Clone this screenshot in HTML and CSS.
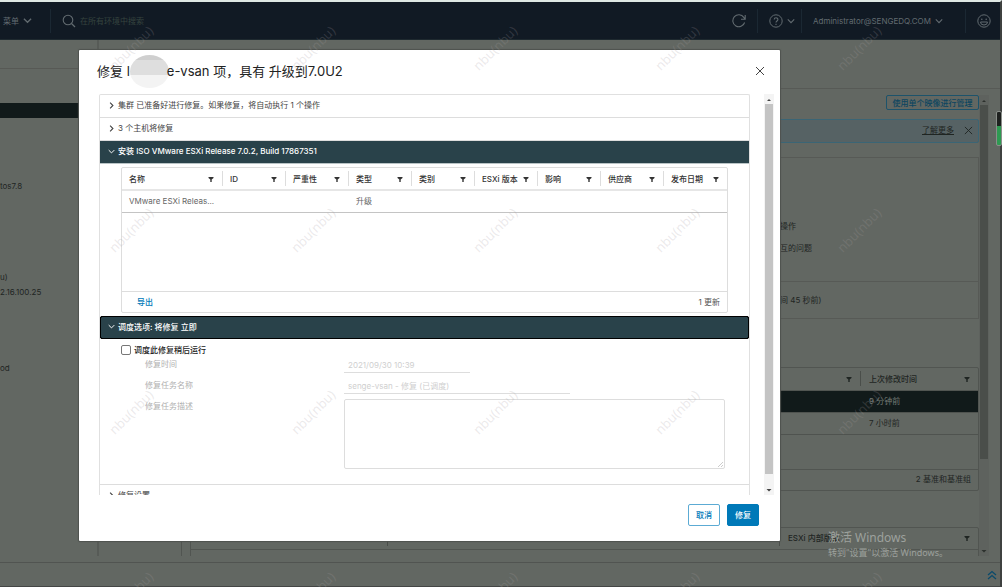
FILE: index.html
```html
<!DOCTYPE html>
<html lang="zh-CN">
<head>
<meta charset="utf-8">
<title>vSphere Client</title>
<link rel="stylesheet" href="styles.css">
</head>
<body>
<svg class="defs" aria-hidden="true">
  <symbol id="down" viewBox="0 0 10 10"><path d="M1 3l4 4 4-4" fill="none" stroke="currentColor" stroke-width="1.4"/></symbol>
  <symbol id="right" viewBox="0 0 10 10"><path d="M3 1l4 4-4 4" fill="none" stroke="currentColor" stroke-width="1.6"/></symbol>
  <symbol id="filter" viewBox="0 0 6 6"><path d="M.5 1h5v1L3.700 3.500V6H2.300V3.500L.5 2z" fill="currentColor"/></symbol>
  <symbol id="close" viewBox="0 0 10 10"><path d="M1 1l8 8M9 1l-8 8" fill="none" stroke="currentColor" stroke-width="1"/></symbol>
  <symbol id="tri-up" viewBox="0 0 6 4"><path d="M1 3l2-2 2 2z" fill="currentColor"/></symbol>
  <symbol id="tri-down" viewBox="0 0 6 4"><path d="M.5 1L3 3.500 5.500 1z" fill="currentColor"/></symbol>
</svg>
<div class="app">
  <header class="topbar">
    <button class="menu">菜单 <svg class="i9"><use href="#down"/></svg></button>
    <label class="search">
      <svg class="i14" viewBox="0 0 14 14"><circle cx="6" cy="6" r="4.8" fill="none" stroke="currentColor" stroke-width="1.1"/><path d="M9.5 9.5L13 13" stroke="currentColor" stroke-width="1.3"/></svg>
      <input type="text" placeholder="在所有环境中搜索" aria-label="在所有环境中搜索">
    </label>
    <button class="refresh" aria-label="刷新"><svg class="i14" viewBox="0 0 14 14"><path d="M12.6 8.5A6 6 0 1 1 11.8 3.4L13 5M13.2 1v4.2H9" fill="none" stroke="currentColor" stroke-width="1.1"/></svg></button>
    <button class="help" aria-label="帮助"><svg class="i14" viewBox="0 0 14 14"><circle cx="7" cy="7" r="6.2" fill="none" stroke="currentColor"/><path d="M5.2 5.6c0-2.4 3.7-2.4 3.7-.1C8.900 7 7 7 7 8.600M7 9.700v1.200" fill="none" stroke="currentColor" stroke-width="1.1"/></svg><svg class="i8"><use href="#down"/></svg></button>
    <button class="user">Administrator@SENGEDQ.COM <svg class="i8"><use href="#down"/></svg></button>
    <button class="smile" aria-label="反馈"><svg class="i14" viewBox="0 0 14 14"><circle cx="7" cy="7" r="6.200" fill="none" stroke="currentColor"/><circle cx="4.800" cy="5.200" r=".8" fill="currentColor"/><circle cx="9.200" cy="5.200" r=".8" fill="currentColor"/><path d="M3.500 8h7a3.500 3 0 0 1-7 0z" fill="none" stroke="currentColor"/></svg></button>
  </header>
  <div class="workspace">
    <nav class="side">
      <div class="side-head"></div>
      <div class="side-sel"></div>
      <ul>
        <li class="n1">tos7.8</li>
        <li class="n2">u)</li>
        <li class="n3">2.16.100.25</li>
        <li class="n4">od</li>
      </ul>
    </nav>
    <main class="main">
      <div class="main-head"></div>
      <div class="pane">
        <div class="rail"></div>
        <div class="pane-body">
          <div class="actions"><button class="btn-dim">使用单个映像进行管理</button></div>
          <div class="alert"><a href="#more">了解更多</a><button aria-label="关闭"><svg class="i9"><use href="#close"/></svg></button></div>
          <section class="card">
            <div class="card-main"><p>操作</p><p>互的问题</p></div>
            <div class="card-foot">间 45 秒前)</div>
          </section>
          <div class="grid-dim">
            <table>
              <thead><tr><th><div class="sep"><svg class="i6"><use href="#filter"/></svg></div></th><th class="c-time"><div>上次修改时间<svg class="i6"><use href="#filter"/></svg></div></th></tr></thead>
              <tbody><tr class="sel"><td></td><td>9 分钟前</td></tr><tr><td></td><td>7 小时前</td></tr></tbody>
            </table>
            <div class="grid-dim-foot">2 基准和基准组</div>
          </div>
          <div class="grid-dim second">
            <table>
              <thead><tr><th class="c-host"><div class="sep"></div></th><th><div class="sep"></div></th><th class="c-build"><div>ESXi 内部版本<svg class="i6"><use href="#filter"/></svg></div></th></tr></thead>
              <tbody><tr><td></td><td class="state">不合规</td><td></td></tr></tbody>
            </table>
          </div>
        </div>
        <div class="bar bar-dim"><svg class="tri"><use href="#tri-up"/></svg><div class="thumb"></div><svg class="tri"><use href="#tri-down"/></svg></div>
      </div>
    </main>
  </div>
  <footer class="tasks"><button aria-label="展开"><svg class="i10" viewBox="0 0 10 10"><path d="M1 5l4-3.500L9 5M1 9l4-3.500L9 9" fill="none" stroke="currentColor" stroke-width="1.300"/></svg></button></footer>
</div>

<div class="meter"></div>
<div class="activate"><p class="big">激活 Windows</p><p>转到"设置"以激活 Windows。</p></div>

<div class="modal" role="dialog" aria-labelledby="dlg-title">
  <div class="modal-head">
    <h1 id="dlg-title">修复 l<span class="blot"></span>e-vsan 项，具有 升级到7.0U2</h1>
    <button class="x" aria-label="关闭"><svg class="i10"><use href="#close"/></svg></button>
  </div>
  <div class="modal-body">
    <div class="accordion">
      <button class="step"><svg class="i7"><use href="#right"/></svg>集群 已准备好进行修复。如果修复，将自动执行 1 个操作</button>
      <button class="step"><svg class="i7"><use href="#right"/></svg>3 个主机将修复</button>
      <button class="step open"><svg class="i7"><use href="#down"/></svg>安装 ISO VMware ESXi Release 7.0.2, Build 17867351</button>
      <div class="panel">
        <div class="datagrid">
          <table>
            <colgroup><col class="first"><col span="8"></colgroup>
            <thead><tr>
              <th><div>名称<svg class="i6"><use href="#filter"/></svg></div></th>
              <th><div>ID<svg class="i6"><use href="#filter"/></svg></div></th>
              <th><div>严重性<svg class="i6"><use href="#filter"/></svg></div></th>
              <th><div>类型<svg class="i6"><use href="#filter"/></svg></div></th>
              <th><div>类别<svg class="i6"><use href="#filter"/></svg></div></th>
              <th><div>ESXi 版本<svg class="i6"><use href="#filter"/></svg></div></th>
              <th><div>影响<svg class="i6"><use href="#filter"/></svg></div></th>
              <th><div>供应商<svg class="i6"><use href="#filter"/></svg></div></th>
              <th><div>发布日期<svg class="i6"><use href="#filter"/></svg></div></th>
            </tr></thead>
            <tbody><tr><td>VMware ESXi Releas...</td><td></td><td></td><td>升级</td><td></td><td></td><td></td><td></td><td></td></tr></tbody>
          </table>
          <div class="datagrid-foot"><a href="#export">导出</a><span>1 更新</span></div>
        </div>
      </div>
      <button class="step open focus"><svg class="i7"><use href="#down"/></svg>调度选项: 将修复 立即</button>
      <form class="schedule">
        <label class="check"><input type="checkbox">调度此修复稍后运行</label>
        <div class="field"><label for="t">修复时间</label><input id="t" class="short" type="text" value="2021/09/30 10:39" disabled></div>
        <div class="field"><label for="n">修复任务名称</label><input id="n" type="text" value="senge-vsan - 修复 (已调度)" disabled></div>
        <div class="field"><label for="d">修复任务描述</label><textarea id="d" disabled></textarea></div>
      </form>
      <button class="step"><svg class="i7"><use href="#right"/></svg>修复设置</button>
    </div>
    <div class="bar"><svg class="tri"><use href="#tri-up"/></svg><div class="thumb"></div><svg class="tri"><use href="#tri-down"/></svg></div>
  </div>
  <div class="modal-foot"><button class="btn">取消</button><button class="btn primary">修复</button></div>
</div>

<div class="marks" aria-hidden="true">
  <span>nbu(nbu)</span><span>nbu(nbu)</span><span>nbu(nbu)</span><span>nbu(nbu)</span><span>nbu(nbu)</span>
  <span>nbu(nbu)</span><span>nbu(nbu)</span><span>nbu(nbu)</span><span>nbu(nbu)</span><span>nbu(nbu)</span>
  <span>nbu(nbu)</span><span>nbu(nbu)</span><span>nbu(nbu)</span><span>nbu(nbu)</span><span>nbu(nbu)</span>
  <span>nbu(nbu)</span><span>nbu(nbu)</span><span>nbu(nbu)</span><span>nbu(nbu)</span><span>nbu(nbu)</span>
</div>
</body>
</html>
```
FILE: styles.css
```css
* { box-sizing: border-box; }
body {
  margin: 0;
  position: relative;
  height: 100vh;
  overflow: hidden;
  font: 8px/12px Inter, "Noto Sans CJK SC", sans-serif;
  color: #1f2522;
}
button, input, textarea { font: inherit; color: inherit; background: none; border: 0; padding: 0; margin: 0; }
p, h1, ul { margin: 0; padding: 0; }
li { list-style: none; }
table { width: 100%; border-collapse: collapse; table-layout: fixed; }
th, td { padding: 0; text-align: left; font-weight: 400; }
svg { flex: none; display: block; }
.defs { position: absolute; width: 0; height: 0; }
.i6 { width: 6px; height: 6px; }
.i7 { width: 7px; height: 7px; }
.i8 { width: 8px; height: 8px; }
.i9 { width: 9px; height: 9px; }
.i10 { width: 10px; height: 10px; }
.i14 { width: 14px; height: 14px; }

/* dimmed page behind the dialog */
.app {
  height: 100%;
  display: flex;
  flex-direction: column;
  background: #626762;
  border-top: 2px solid #dfe8e4;
  border-bottom: 1px solid #444645;
  border-right: 2px solid #3f4140;
}
.topbar {
  height: 38px;
  flex: none;
  display: flex;
  align-items: center;
  background: #111a24;
  color: #626b70;
  border-bottom: 1px solid #1e292f;
}
.topbar button { height: 24px; display: flex; align-items: center; border-right: 1px solid #1b2833; }
.topbar .menu { width: 51px; padding-left: 3px; gap: 4px; }
.search { flex: 1; display: flex; align-items: center; gap: 4px; padding-left: 11px; }
.search input { width: 160px; }
.search input::placeholder { color: #36443f; opacity: 1; }
.topbar .refresh { width: 26px; }
.topbar .help { width: 44px; gap: 4px; padding-left: 11px; }
.topbar .user { width: 164px; gap: 4px; padding-left: 11px; }
.topbar .smile { width: 34px; padding-left: 11px; border-right: 0; }

.workspace { flex: 1; min-height: 0; display: flex; }
.side { width: 99px; border-right: 2px solid #575b57; flex: none; margin-bottom: 6px; }
.side-head { height: 29px; border-bottom: 1px solid #575955; }
.side-sel { height: 15px; margin-top: 34px; background: #111a1a; }
.n1 { margin-top: 62px; }
.n2 { margin-top: 79px; }
.n3 { margin-top: 3px; }
.n4 { margin-top: 64px; }
.main { flex: 1; min-width: 0; display: flex; flex-direction: column; }
.main-head { height: 49px; flex: none; border-bottom: 1px solid #575a56; }
.pane { flex: 1; min-height: 0; display: flex; padding: 6px 11px 6px 0; }
.rail { width: 83px; flex: none; border-right: 1px solid #515551; }
.pane-body { flex: 1; min-width: 0; padding-left: 8px; overflow: hidden; }
.actions { display: flex; justify-content: flex-end; }
.btn-dim { height: 15px; width: 93px; border: 1px solid #1d536b; border-radius: 2px; color: #0c4560; font-weight: 500; white-space: nowrap; line-height: 12px; }
.alert {
  margin-top: 9px;
  height: 24px;
  border: 1px solid #3b6575;
  border-radius: 2px;
  background: #566264;
  display: flex;
  justify-content: flex-end;
  align-items: center;
  gap: 10px;
  padding: 0 5px 2px 0;
}
.alert a { color: #1f2522; text-decoration: underline; }
.card { margin-top: 14px; border: 1px solid #575a56; }
.card-main { height: 124px; padding: 62px 0 0 589px; display: grid; gap: 10px; align-content: start; border-bottom: 1px solid #575a56; white-space: nowrap; }
.card-foot { height: 36px; padding: 12px 0 0 589px; white-space: nowrap; }
.grid-dim { margin-top: 48px; border: 1px solid #515551; border-radius: 2px; }
.grid-dim th { height: 22px; border-bottom: 1px solid #515551; font-weight: 500; }
.grid-dim th div { display: flex; justify-content: space-between; align-items: center; padding-right: 8px; height: 15px; }
.grid-dim th .sep { justify-content: flex-end; border-right: 1px solid #4a4e4a; }
.grid-dim td { height: 22px; border-bottom: 1px solid #4f534f; }
.grid-dim .c-time { width: 117px; }
.grid-dim th + th div, .grid-dim td + td { padding-left: 8px; }
.grid-dim .sel { background: #111a1a; color: #747b76; }
.grid-dim-foot { margin-top: 34px; height: 21px; border-top: 1px solid #515551; text-align: right; padding: 3px 7px 0 0; }
.second { margin-top: 36px; height: 60px; }
.second .c-host { width: 197px; }
.second .c-build { width: 198px; }
.second td + .state { padding: 2px 0 0 18px; }
.tasks { height: 24px; flex: none; border-top: 1px solid #515451; display: flex; justify-content: flex-end; align-items: center; padding-right: 3px; color: #0b4a6b; }

.bar { width: 10px; flex: none; display: flex; flex-direction: column; align-items: center; background: #f4f4f4; color: #444; padding: 4px 0 3px; }
.bar .tri { width: 6px; height: 4px; }
.bar .thumb { width: 8px; flex: 1; background: #c4c4c4; margin: 2px 0 14px; }
.bar-dim { background: #5e625e; color: #2c302d; }
.bar-dim .thumb { background: #4a4e4a; margin-bottom: 90px; }

.meter { position: absolute; right: 0; top: 111px; width: 6px; height: 35px; border: 1px solid #8a8f8a; border-radius: 2px; background: linear-gradient(#1e211f 42%, #2e9a52 42%); }
.activate { position: absolute; right: 54px; bottom: 28px; color: #9da19d; font: 9px/13px "Noto Sans", "Noto Sans CJK SC", sans-serif; z-index: 3; }
.activate .big { font-size: 12px; line-height: 16px; }

/* dialog */
.modal {
  position: absolute;
  top: 50px;
  right: 222px;
  bottom: 46px;
  left: 79px;
  z-index: 1;
  display: flex;
  flex-direction: column;
  background: #fff;
  border-radius: 1px;
  box-shadow: 0 0 1px 1px #4f534f;
}
.modal-head { height: 44px; flex: none; display: flex; justify-content: space-between; align-items: center; padding: 0 15px 2px 18px; }
h1 { font-size: 13px; line-height: 20px; font-weight: 400; display: flex; align-items: center; white-space: pre; color: #222; }
.blot { width: 39px; height: 33px; margin-right: -2px; border-radius: 50%; background: linear-gradient(#cfcfcf 5px, #dedede 5px 20px, #f3f3f3 20px); }
.x { color: #444; }
.modal-body { flex: 1; min-height: 0; display: flex; gap: 14px; padding: 0 6px 0 20px; }
.accordion { flex: 1; min-width: 0; overflow: hidden; border: 1px solid #e0e0e0; border-bottom: 0; border-radius: 2px 2px 0 0; }
.step { width: 100%; height: 23px; display: flex; align-items: center; gap: 3px; padding: 0 0 2px 8px; border-bottom: 1px solid #ddd; text-align: left; color: #444; white-space: pre; }
.step.open { background: #29424a; color: #fff; border-color: #b9c4c6; font-weight: 500; }
.step.focus { border: 1px solid #000; border-radius: 2px; outline: 1px solid #000; outline-offset: -1px; padding-left: 7px; }
.panel { padding: 3px 21px; }
.datagrid { height: 146px; display: flex; flex-direction: column; justify-content: space-between; border: 1px solid #ddd; border-radius: 2px; }
.datagrid .first { width: 101px; }
.datagrid th { height: 22px; border-bottom: 2px solid #e6e6e6; color: #333; font-weight: 500; }
.datagrid th div { height: 15px; display: flex; justify-content: space-between; align-items: center; padding: 0 8px 0 7px; border-right: 1px solid #ddd; white-space: nowrap; }
.datagrid th:last-child div { border-right: 0; }
.datagrid td { height: 22px; padding-left: 7px; border-bottom: 1px solid #c4c4c4; color: #666; white-space: nowrap; }
.datagrid-foot { height: 21px; border-top: 1px solid #ddd; display: flex; justify-content: space-between; align-items: center; padding: 0 7px 0 15px; color: #555; }
.datagrid-foot a { color: #0079b8; text-decoration: none; font-weight: 500; }
.schedule { height: 146px; padding: 4px 24px 0 21px; color: #b0b0b0; border-bottom: 1px solid #ddd; }
.check { display: flex; align-items: center; gap: 3px; height: 13px; margin-bottom: 1px; color: #222; font-weight: 500; }
.check input { appearance: none; width: 10px; height: 10px; border: 1px solid #777; border-radius: 2px; }
.field { display: grid; grid-template-columns: 199px 1fr; margin-left: 24px; margin-bottom: 5px; line-height: 15px; }
.field input { width: 226px; height: 16px; padding: 0 4px; border-bottom: 1px solid #ddd; color: #cfcfcf; }
.field .short { width: 126px; }
.field textarea { height: 70px; border: 1px solid #ddd; border-radius: 2px; resize: none; background: linear-gradient(135deg, transparent 50%, #ccc 50% 60%, transparent 60% 75%, #ccc 75% 85%, transparent 85%) no-repeat right 1px bottom 1px / 6px 6px; }
.modal-foot { height: 46px; flex: none; display: flex; justify-content: flex-end; align-items: flex-start; gap: 7px; padding: 9px 21px 0 0; }
.btn { width: 32px; height: 22px; border: 1px solid #5cabd4; border-radius: 2px; color: #0079b8; font-weight: 500; }
.primary { background: #0079b8; border-color: #0079b8; color: #fff; }

.marks {
  position: absolute;
  inset: -43px 0 0 40px;
  display: grid;
  grid-template-columns: repeat(5, 182px);
  grid-auto-rows: 182px;
  place-items: center;
  overflow: hidden;
  pointer-events: none;
  z-index: 2;
  font: 13px/16px "Noto Sans", sans-serif;
  color: rgba(165, 158, 160, .22);
}
.marks span { transform: rotate(-45deg); }
```
